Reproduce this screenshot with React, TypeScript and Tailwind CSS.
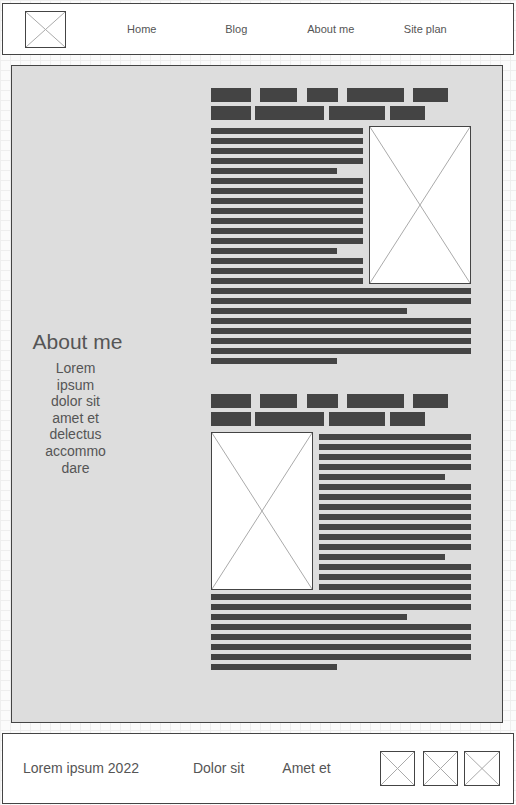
import type { ReactNode } from "react";

const row1 = [
  { w: 40, ml: 0 },
  { w: 37, ml: 9 },
  { w: 31, ml: 10 },
  { w: 57, ml: 9 },
  { w: 35, ml: 9 },
];
const row2 = [
  { w: 40, ml: 0 },
  { w: 69, ml: 4 },
  { w: 56, ml: 5 },
  { w: 35, ml: 5 },
];

// widths of the narrow text lines beside a picture, 0 = full
const narrow = [0, 0, 0, 0, 126, 0, 0, 0, 0, 0, 0, 0, 126, 0, 0, 0];
const wide = [0, 0, 196, 0, 0, 0, 0, 126];

function Cross({ className }: { className: string }) {
  return (
    <div className={`relative border border-[#444] bg-white ${className}`}>
      <svg className="absolute inset-0 h-full w-full" viewBox="0 0 100 100" preserveAspectRatio="none">
        <line x1="0" y1="0" x2="100" y2="100" stroke="#aaa" strokeWidth={1} vectorEffect="non-scaling-stroke" />
        <line x1="100" y1="0" x2="0" y2="100" stroke="#aaa" strokeWidth={1} vectorEffect="non-scaling-stroke" />
      </svg>
    </div>
  );
}

function Tags() {
  return (
    <div className="flex flex-col gap-[4px]">
      <div className="flex">
        {row1.map((t, i) => (
          <div key={i} className="h-[14px] bg-[#444]" style={{ width: t.w, marginLeft: t.ml }} />
        ))}
      </div>
      <div className="flex">
        {row2.map((t, i) => (
          <div key={i} className="h-[14px] bg-[#444]" style={{ width: t.w, marginLeft: t.ml }} />
        ))}
      </div>
    </div>
  );
}

function Lines({ widths }: { widths: number[] }) {
  return (
    <div className="flex flex-col gap-[4px]">
      {widths.map((w, i) => (
        <div key={i} className="h-[6px] bg-[#444]" style={{ width: w || "100%" }} />
      ))}
    </div>
  );
}

function Article({ imageLeft, className }: { imageLeft?: boolean; className?: string }) {
  const text: ReactNode = (
    <div className="w-[152px] pt-[2px]">
      <Lines widths={narrow} />
    </div>
  );
  const pic = <Cross className="h-[158px] w-[102px]" />;
  return (
    <div className={className}>
      <Tags />
      <div className="mt-[6px] flex gap-[6px]">
        {imageLeft ? pic : text}
        {imageLeft ? text : pic}
      </div>
      <div className="mt-[4px]">
        <Lines widths={wide} />
      </div>
    </div>
  );
}

export default function App() {
  return (
    <div className="h-[805px] w-[516px] overflow-hidden bg-[#fbfbfb] bg-[linear-gradient(to_right,#eeeeee_1px,transparent_1px),linear-gradient(to_bottom,#eeeeee_1px,transparent_1px)] bg-[size:10px_10px] pt-[3px] font-['Liberation_Sans',Arial,sans-serif] text-[#555]">
      {/* header */}
      <header className="ml-[2px] flex h-[52px] w-[512px] items-center border border-[#444] bg-white">
        <Cross className="ml-[22px] h-[37px] w-[41px]" />
        <nav className="ml-[28.5px] flex text-[11px]">
          {["Home", "Blog", "About me", "Site plan"].map((n) => (
            <span key={n} className="w-[94.5px] text-center">
              {n}
            </span>
          ))}
        </nav>
      </header>

      {/* main */}
      <main className="ml-[11px] mt-[10px] flex h-[658px] w-[492px] border border-[#444] bg-[#dddddd]">
        <div className="flex w-[131px] flex-col items-center pt-[264px]">
          <h1 className="text-[21px] leading-[24px]">About me</h1>
          <p className="mr-[4px] mt-[6px] text-center text-[14px] leading-[16.6px]">
            Lorem
            <br />
            ipsum
            <br />
            dolor sit
            <br />
            amet et
            <br />
            delectus
            <br />
            accommo
            <br />
            dare
          </p>
        </div>
        <div className="ml-[68px] w-[260px] pt-[22px]">
          <Article />
          <Article imageLeft className="mt-[30px]" />
        </div>
      </main>

      {/* footer */}
      <footer className="ml-[2px] mt-[10px] flex h-[71px] w-[512px] items-center border border-[#444] bg-white text-[14px]">
        <span className="ml-[20px]">Lorem ipsum 2022</span>
        <span className="ml-[54px]">Dolor sit</span>
        <span className="ml-[38px]">Amet et</span>
        <Cross className="ml-[49px] h-[35px] w-[35px]" />
        <Cross className="ml-[8px] h-[35px] w-[35px]" />
        <Cross className="ml-[6px] h-[35px] w-[36px]" />
      </footer>
    </div>
  );
}
